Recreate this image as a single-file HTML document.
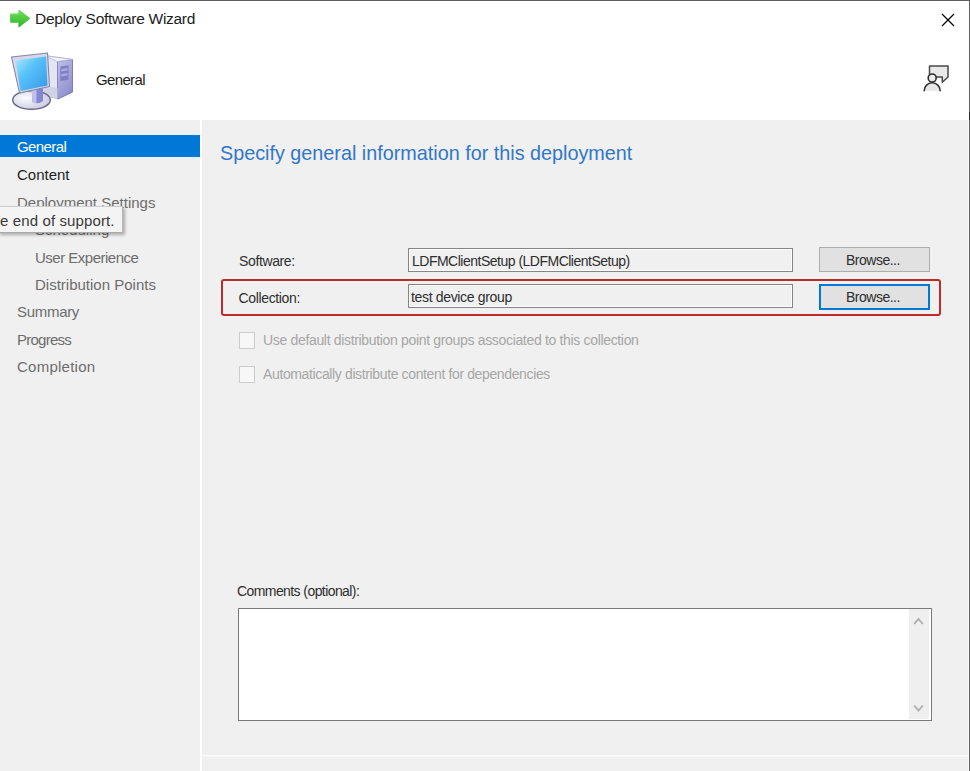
<!DOCTYPE html>
<html><head><meta charset="utf-8">
<style>
*{box-sizing:border-box;margin:0;padding:0}
html,body{width:970px;height:771px;overflow:hidden;background:#fff}
body{position:relative;font-family:"Liberation Sans",sans-serif;color:#000}
.a{position:absolute;white-space:pre}
.nav{font-size:15px;line-height:15px;color:#6d6d6d}
.frm{font-size:14px;line-height:14px;color:#2e2e2e}
</style></head><body>
<!-- window borders -->
<div class="a" style="left:0;top:0;width:970px;height:1px;background:#5f5f5f;z-index:50"></div>
<div class="a" style="left:969px;top:0;width:1px;height:771px;background:#5f5f5f;z-index:50"></div>

<!-- title bar -->
<svg class="a" style="left:9px;top:9px" width="23" height="19" viewBox="0 0 23 19">
  <defs><linearGradient id="ga" x1="0" y1="0" x2="0" y2="1"><stop offset="0" stop-color="#6ee05a"/><stop offset="1" stop-color="#2fb52a"/></linearGradient></defs>
  <path d="M1.8 5.2 H10 V1.5 L20.5 9.5 L10 17.5 V13 H1.8 Z" fill="url(#ga)" stroke="url(#ga)" stroke-width="1.3" stroke-linejoin="round"/>
</svg>
<div class="a" style="left:35px;top:11px;font-size:15.5px;line-height:15.5px;color:#1c1c1c;letter-spacing:-0.28px">Deploy Software Wizard</div>
<svg class="a" style="left:941px;top:13px" width="14" height="14" viewBox="0 0 14 14">
  <path d="M1 1 L13 13 M13 1 L1 13" stroke="#000" stroke-width="1.2"/>
</svg>

<!-- header -->
<svg class="a" style="left:0;top:40px" width="90" height="80" viewBox="0 40 90 80">
  <defs>
    <linearGradient id="scr" x1="0" y1="0" x2="1" y2="1"><stop offset="0" stop-color="#aeeaff"/><stop offset="0.4" stop-color="#58c2f8"/><stop offset="1" stop-color="#3498ea"/></linearGradient>
    <linearGradient id="twr" x1="0" y1="0" x2="1" y2="0"><stop offset="0" stop-color="#f2f2fa"/><stop offset="1" stop-color="#d4d4ea"/></linearGradient>
    <linearGradient id="side" x1="0" y1="0" x2="0.6" y2="1"><stop offset="0" stop-color="#c2c2ee"/><stop offset="1" stop-color="#8e8ecc"/></linearGradient>
    <radialGradient id="bse" cx="0.35" cy="0.4" r="0.7"><stop offset="0" stop-color="#fbfbff"/><stop offset="1" stop-color="#c9c9dc"/></radialGradient>
  </defs>
  <!-- tower -->
  <path d="M44 55.5 L62 58 L72.5 59.5 L72.5 92 L58 99 L44 95 Z" fill="#e4e4f2" stroke="#9a9abc" stroke-width="0.8"/>
  <path d="M57.5 61.5 L72.5 59.5 L72.5 92 L57.5 99 Z" fill="url(#side)" stroke="#6e6ea4" stroke-width="0.7"/>
  <path d="M44 55.5 L58 57.5 L72.5 59.5 L57.5 61.5 Z" fill="#f4f4fc" stroke="#a8a8c8" stroke-width="0.6"/>
  <path d="M44 86 L57.5 88 L57.5 99 L44 95 Z" fill="#d2d2e6"/>
  <path d="M60.3 66.5 L68.5 65.3 L68.5 79.5 L60.3 81.2 Z" fill="#7d7fc2"/>
  <path d="M61.3 69 L67.5 68 L67.5 70.5 L61.3 71.5 Z" fill="#a9abe0"/>
  <path d="M61.3 74 L67.5 73 L67.5 75.5 L61.3 76.5 Z" fill="#a9abe0"/>
  <!-- base -->
  <ellipse cx="31.5" cy="100" rx="18.8" ry="9.3" fill="url(#bse)" stroke="#66668a" stroke-width="1.4"/>
  <path d="M31.5 86 L43 86 L43 101 Q38 105 32.5 102 Z" fill="#8585d0"/>
  <path d="M31.5 86 L36.5 86 L36.5 103 Q34 103 32.5 102 Z" fill="#c0c0ee"/>
  <!-- monitor -->
  <path d="M11.5 57 L47.5 53 L49.5 86.5 L19.5 93 Z" fill="#d6d6ea" stroke="#8585a8" stroke-width="1.1" stroke-linejoin="round"/>
  <path d="M15.5 60.5 L46 56.5 L47.5 85.5 L20.5 91 Z" fill="url(#scr)"/>
</svg>
<svg class="a" style="left:920px;top:62px" width="32" height="32" viewBox="920 62 32 32">
  <path d="M929.5 66 H948 V77 L942.3 82.3 V77 H929.5 Z" fill="#e9e9e9"/>
  <path d="M929.5 74.5 V66 H948 V77 L942.3 82.3 V77 H936" fill="none" stroke="#4a4a4a" stroke-width="1.5" stroke-linejoin="round"/>
  <path d="M924.2 90.8 A8 8 0 0 1 940.2 90.8 Z" fill="#e6e6e6" stroke="none"/>
  <path d="M924.2 90.8 A8 8 0 0 1 940.2 90.8" fill="none" stroke="#333" stroke-width="1.6" stroke-linecap="round"/>
  <circle cx="932.2" cy="78" r="4" fill="#ececec" stroke="#2e2e2e" stroke-width="1.6"/>
</svg>
<div class="a" style="left:96px;top:72px;font-size:15px;line-height:15px;color:#1e1e1e;letter-spacing:-0.65px">General</div>

<!-- panes -->
<div class="a" style="left:0;top:120px;width:200px;height:651px;background:#f0f0f0"></div>
<div class="a" style="left:200px;top:120px;width:2px;height:651px;background:#fff"></div>
<div class="a" style="left:202px;top:120px;width:767px;height:651px;background:#f0f0f0"></div>
<div class="a" style="left:202px;top:755px;width:767px;height:1px;background:#fcfcfc"></div>
<div class="a" style="left:202px;top:756px;width:767px;height:1px;background:#f6f6f6"></div>
<div class="a" style="left:968px;top:120px;width:1px;height:651px;background:#fafafa"></div>
<div class="a" style="left:969px;top:112px;width:1px;height:8px;background:#262626;z-index:51"></div>

<!-- nav -->
<div class="a" style="left:0;top:135px;width:200px;height:22px;background:#0078d7"></div>
<div class="a nav" style="left:17px;top:139px;color:#fff;letter-spacing:-0.6px">General</div>
<div class="a nav" style="left:17px;top:167px;color:#1e1e1e">Content</div>
<div class="a nav" style="left:17px;top:195px">Deployment Settings</div>
<div class="a nav" style="left:35px;top:222px">Scheduling</div>
<div class="a nav" style="left:35px;top:250px;letter-spacing:-0.5px">User Experience</div>
<div class="a nav" style="left:35px;top:277px">Distribution Points</div>
<div class="a nav" style="left:17px;top:304px;letter-spacing:-0.3px">Summary</div>
<div class="a nav" style="left:17px;top:332px;letter-spacing:-0.75px">Progress</div>
<div class="a nav" style="left:17px;top:359px;letter-spacing:0.25px">Completion</div>

<!-- tooltip -->
<div class="a" style="left:-2px;top:206px;width:125px;height:27px;background:#f4f4f4;border:1px solid #cdcdcd;border-bottom-color:#a9a9a9;border-right-color:#b5b5b5;box-shadow:2px 2px 3px rgba(0,0,0,0.28);z-index:5"></div>
<div class="a nav" style="left:0;top:213px;color:#3a3a3a;z-index:6;letter-spacing:0.12px">e end of support.</div>

<!-- heading -->
<div class="a" style="left:220px;top:143px;font-size:19.8px;line-height:20px;color:#3277c8">Specify general information for this deployment</div>

<!-- form -->
<div class="a frm" style="left:239px;top:254px;letter-spacing:-0.37px">Software:</div>
<div class="a" style="left:408px;top:248px;width:385px;height:24px;border:1px solid #858585;background:#f0f0f0;box-shadow:inset 1px 1px 0 #fff,inset -1px -1px 0 #fff"></div>
<div class="a frm" style="left:412px;top:254px;letter-spacing:-0.5px">LDFMClientSetup (LDFMClientSetup)</div>
<div class="a" style="left:819px;top:247px;width:111px;height:25px;border:1px solid #adadad;background:#e1e1e1"></div>
<div class="a frm" style="left:846px;top:253px;letter-spacing:-0.5px">Browse...</div>

<div class="a" style="left:221px;top:279px;width:720px;height:37px;border:2px solid #c02a2a;border-radius:3px"></div>
<div class="a frm" style="left:238.5px;top:291px;letter-spacing:-0.35px">Collection:</div>
<div class="a" style="left:408px;top:284px;width:385px;height:24px;border:1px solid #858585;background:#f0f0f0;box-shadow:inset 1px 1px 0 #fff,inset -1px -1px 0 #fff"></div>
<div class="a frm" style="left:411px;top:290px;letter-spacing:-0.34px">test device group</div>
<div class="a" style="left:819px;top:284px;width:111px;height:26px;border:2px solid #0078d7;background:#e1e1e1"></div>
<div class="a frm" style="left:846px;top:290px;letter-spacing:-0.5px">Browse...</div>

<div class="a" style="left:239px;top:332px;width:16px;height:17px;border:1px solid #cccccc;background:#f7f7f7"></div>
<div class="a frm" style="left:263px;top:333px;color:#a6a6a6;letter-spacing:-0.33px">Use default distribution point groups associated to this collection</div>
<div class="a" style="left:239px;top:366px;width:16px;height:17px;border:1px solid #cccccc;background:#f7f7f7"></div>
<div class="a frm" style="left:263px;top:367px;color:#a6a6a6;letter-spacing:-0.37px">Automatically distribute content for dependencies</div>

<div class="a frm" style="left:237px;top:584px;letter-spacing:-0.58px">Comments (optional):</div>
<div class="a" style="left:238px;top:608px;width:694px;height:113px;border:1px solid #7a7a7a;background:#fff"></div>
<div class="a" style="left:909px;top:609px;width:20px;height:110px;background:#efefef"></div>
<svg class="a" style="left:900px;top:600px" width="40" height="130" viewBox="900 600 40 130">
  <path d="M914.2 624 L918.5 619 L922.8 624" fill="none" stroke="#b0b0b0" stroke-width="1.9"/>
  <path d="M914.2 705.5 L918.5 710.5 L922.8 705.5" fill="none" stroke="#b0b0b0" stroke-width="1.9"/>
</svg>
</body></html>
